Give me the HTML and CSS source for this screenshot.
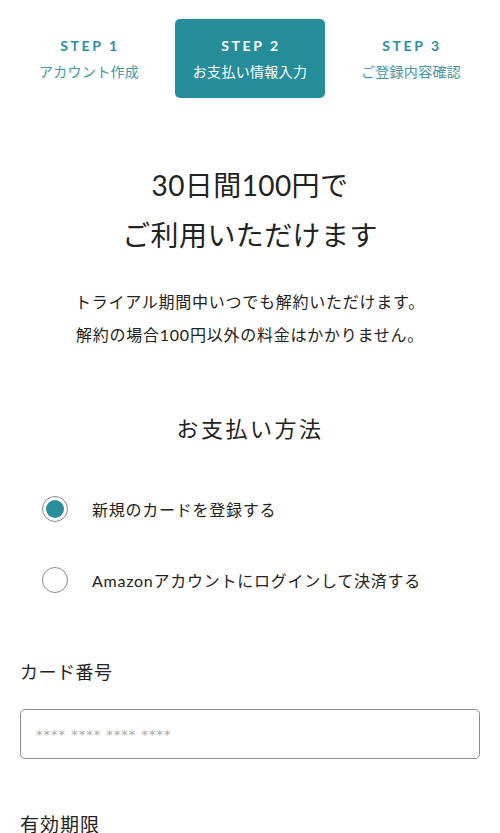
FILE: index.html
```html
<!DOCTYPE html>
<html lang="ja">
<head>
<meta charset="utf-8">
<title>お支払い情報入力</title>
<link rel="stylesheet" href="styles.css">
</head>
<body>
<nav class="steps">
  <div class="step">
    <div class="step-num">STEP 1</div>
    <div class="step-name">アカウント作成</div>
  </div>
  <div class="step active">
    <div class="step-num">STEP 2</div>
    <div class="step-name">お支払い情報入力</div>
  </div>
  <div class="step">
    <div class="step-num">STEP 3</div>
    <div class="step-name">ご登録内容確認</div>
  </div>
</nav>

<h1 class="title">30日間100円で<br>ご利用いただけます</h1>

<p class="lead">トライアル期間中いつでも解約いただけます。<br>解約の場合100円以外の料金はかかりません。</p>

<h2 class="section-title">お支払い方法</h2>

<div class="methods">
  <label class="method">
    <span class="radio checked"></span>
    <span class="method-label">新規のカードを登録する</span>
  </label>
  <label class="method">
    <span class="radio"></span>
    <span class="method-label">Amazonアカウントにログインして決済する</span>
  </label>
</div>

<div class="field">
  <div class="field-label">カード番号</div>
  <div class="input"><span class="placeholder">**** **** **** ****</span></div>
</div>

<div class="field field-next">
  <div class="field-label">有効期限</div>
</div>
</body>
</html>
```

FILE: styles.css
```css
* { box-sizing: border-box; }

html, body {
  margin: 0;
  padding: 0;
  background: #fff;
}

body {
  font-family: "Lato", "Noto Sans CJK JP", sans-serif;
  color: #222;
}

.steps {
  display: flex;
  gap: 11px;
  padding: 19px 14px 0;
}

.step {
  width: 150px;
  height: 79px;
  display: flex;
  flex-direction: column;
  align-items: center;
  justify-content: center;
  color: #2c8f9c;
  border-radius: 5px;
}

.step.active {
  background: #268e9b;
  color: #fff;
}

.step-num {
  font-weight: 700;
  font-size: 14px;
  letter-spacing: 2.6px;
  line-height: 26px;
  padding-left: 2px;
}

.step-name {
  font-size: 14px;
  line-height: 26px;
  letter-spacing: 0.3px;
}

.step:not(.active) .step-name {
  color: #4596a2;
}

.title {
  margin: 62px 0 0;
  text-align: center;
  font-weight: 400;
  font-size: 28px;
  line-height: 50px;
  letter-spacing: 0.4px;
}

.lead {
  margin: 25px 0 0;
  text-align: center;
  font-size: 16px;
  line-height: 33px;
  letter-spacing: 0.75px;
}

.section-title {
  margin: 58px 0 0;
  text-align: center;
  font-weight: 400;
  font-size: 22px;
  line-height: 40px;
  letter-spacing: 2.5px;
}

.methods {
  margin-top: 35px;
  display: flex;
  flex-direction: column;
  gap: 21px;
  padding-left: 42px;
}

.method {
  display: flex;
  align-items: center;
  height: 50px;
  gap: 24px;
}

.radio {
  width: 26px;
  height: 26px;
  border-radius: 50%;
  border: 1.5px solid #8a8a8a;
  display: flex;
  align-items: center;
  justify-content: center;
  flex: none;
}

.radio.checked::after {
  content: "";
  width: 18px;
  height: 18px;
  border-radius: 50%;
  background: #2a8e9c;
}

.method-label {
  font-size: 16px;
  letter-spacing: 0.75px;
}

.field {
  padding: 0 20px;
  margin-top: 52px;
}

.field-label {
  font-size: 18px;
  line-height: 30px;
  letter-spacing: 0.5px;
}

.input {
  margin-top: 22px;
  height: 50px;
  border: 1.5px solid #8c8c8c;
  border-radius: 5px;
  display: flex;
  align-items: center;
  padding-left: 15px;
}

.placeholder {
  font-family: "DejaVu Sans", sans-serif;
  font-size: 13px;
  color: #aaa;
  letter-spacing: 1px;
}

.field-next {
  margin-top: 51px;
}

.field-next .field-label {
  font-size: 19px;
  letter-spacing: 1px;
}
```
